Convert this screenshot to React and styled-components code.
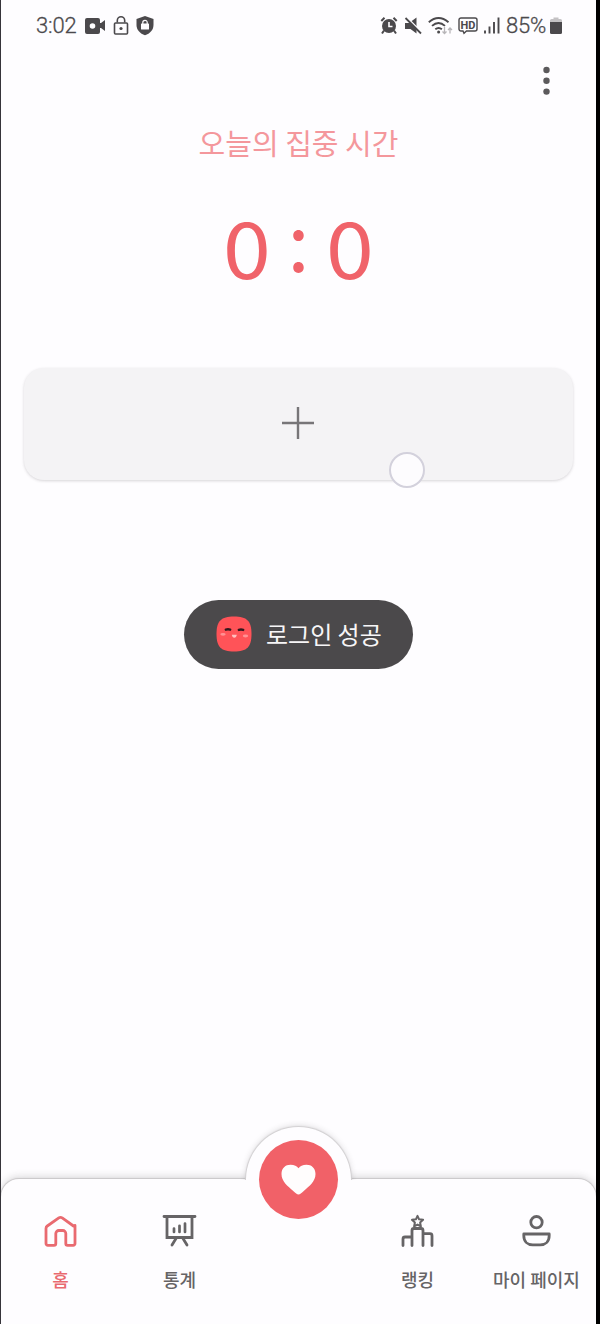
import React from "react";
import styled, { createGlobalStyle } from "styled-components";

const GlobalStyle = createGlobalStyle`
  * { box-sizing: border-box; }
  body { margin: 0; background: #fefdff; }
`;

const Screen = styled.main`
  width: 600px;
  height: 1324px;
  display: flex;
  flex-direction: column;
  background: #fefdff;
  border-left: 1px solid #36343a;
  border-right: 4px solid #000;
  font-family: "Noto Sans CJK KR", "Noto Sans", sans-serif;
  overflow: hidden;
`;

const StatusBar = styled.header`
  height: 52px;
  padding: 0 34px 0 35px;
  display: flex;
  align-items: center;
  justify-content: space-between;
  color: #4b494c;
  font: 400 22px/26px Roboto, sans-serif;
`;

const StatusGroup = styled.div`
  display: flex;
  align-items: center;
  gap: ${({ $gap }) => $gap}px;
`;

const StatusText = styled.span`
  width: ${({ $width }) => $width}px;
  font-size: 22px;
  font-weight: 300;
  letter-spacing: -0.2px;
  white-space: nowrap;
  -webkit-text-stroke: 0.3px #4b494c;
`;

const Glyph = styled.svg`
  display: block;
  flex: none;
  overflow: visible;
`;

const MenuRow = styled.div`
  height: 58px;
  padding-right: 42px;
  display: flex;
  align-items: center;
  justify-content: flex-end;
`;

const MenuButton = styled.button`
  width: 16px;
  height: 30px;
  padding: 0;
  border: 0;
  background: none;
  color: #5c5a5c;
`;

const Title = styled.h1`
  margin: 11px 0 0;
  height: 42px;
  text-align: center;
  font-size: 29px;
  font-weight: 400;
  line-height: 42px;
  color: #f4979c;
`;

const Timer = styled.div`
  height: 110px;
  margin-top: 27px;
  display: flex;
  justify-content: center;
  align-items: center;
  font-size: 79px;
  line-height: 110px;
  color: #f0636a;
`;

const Digit = styled.span`
  width: 44px;
  text-align: center;
  transform: scaleX(1.09);
`;

const Colon = styled.span`
  width: 59px;
  text-align: center;
  padding-bottom: 14px;
`;

const AddCard = styled.button`
  position: relative;
  align-self: center;
  width: 549px;
  height: 112px;
  margin: 68px 0 0;
  padding: 0 1px 2px 0;
  border: 0;
  border-radius: 20px;
  display: flex;
  align-items: center;
  justify-content: center;
  background: #f4f3f5;
  box-shadow: 0 1px 3px rgba(60, 55, 60, 0.2);
  color: #777578;
`;

const TouchPoint = styled.span`
  position: absolute;
  left: 365px;
  top: 84px;
  width: 36px;
  height: 36px;
  border: 2px solid #d3d1dc;
  border-radius: 50%;
  background: #fdfcfe;
`;

const Toast = styled.div`
  align-self: center;
  width: 229px;
  height: 69px;
  margin-top: 120px;
  padding: 0 0 1px 32px;
  border-radius: 35px;
  display: flex;
  align-items: center;
  gap: 14px;
  background: #4b494b;
  color: #f7f6f7;
  font-size: 24px;
  line-height: 34px;
  white-space: nowrap;
`;

const TabBar = styled.nav`
  position: relative;
  height: 145px;
  margin-top: auto;
  display: grid;
  grid-template-columns: repeat(5, 119px);
  border-radius: 18px 18px 0 0;
  background: #fefdff;
  box-shadow: 0 0 1px 1px #c9c7c9, 0 -3px 7px rgba(50, 45, 50, 0.15);
`;

const Tab = styled.a`
  height: 145px;
  padding-top: 35px;
  display: flex;
  flex-direction: column;
  align-items: center;
  gap: 18px;
  color: ${({ $active }) => ($active ? "#e96a70" : "#666466")};
  font-size: 18px;
  font-weight: 500;
  line-height: 26px;
  white-space: nowrap;
`;

const FocusSlot = styled.div`
  display: flex;
  justify-content: center;
`;

const FocusHalo = styled.div`
  position: absolute;
  top: -52px;
  left: 245px;
  width: 105px;
  height: 105px;
  border-radius: 50%;
  background: #fefdff;
  box-shadow: 0 0 1px 1px #d2d0d2, 0 -1px 6px rgba(50, 45, 50, 0.18);
  clip-path: inset(-10px -10px 52px -10px);
`;

const FocusButton = styled.button`
  position: absolute;
  top: -39px;
  left: 258px;
  width: 79px;
  height: 79px;
  padding: 0;
  border: 0;
  border-radius: 50%;
  display: flex;
  align-items: center;
  justify-content: center;
  background: #f16168;
  color: #fffdfd;
`;

const VideoIcon = () => (
  <Glyph width="22" height="18" viewBox="0 0 22 18" fill="currentColor">
    <path fillRule="evenodd" d="M3 1h11a2 2 0 0 1 2 2v3h1l4-3v11l-4-3h-1v4a2 2 0 0 1-2 2H3a2 2 0 0 1-2-2V3a2 2 0 0 1 2-2Zm5.5 5.2a2.8 2.8 0 1 0 0 5.6 2.8 2.8 0 0 0 0-5.6Z" />
  </Glyph>
);

const LockIcon = () => (
  <Glyph width="16" height="20" viewBox="0 0 16 20" fill="none" stroke="currentColor" strokeWidth="1.6">
    <rect x="1.5" y="7" width="13" height="11" rx="1" />
    <path d="M4.300 6.500V4.500a3.700 3.700 0 0 1 7.400 0v2" />
    <circle cx="8" cy="12.500" r="1.600" fill="currentColor" stroke="none" />
  </Glyph>
);

const ShieldIcon = () => (
  <Glyph width="18" height="20" viewBox="0 0 18 20">
    <path d="M9 0 17.500 3v6c0 5-3.500 8.500-8.500 10.300C4 17.500.500 14 .500 9V3Z" fill="currentColor" />
    <rect x="5" y="7.500" width="8" height="6" rx=".6" fill="#fefdff" />
    <path d="M6.800 8.500v-2a2.200 2.200 0 0 1 4.400 0v2" fill="none" stroke="#fefdff" strokeWidth="1.200" />
  </Glyph>
);

const AlarmIcon = () => (
  <Glyph width="18" height="18" viewBox="0 0 18 18" fill="none" stroke="currentColor">
    <circle cx="9" cy="9" r="7" fill="currentColor" stroke="none" />
    <path d="M1.300 4 4.500.800M16.700 4 13.500.800M4 13.500l-2 3M14 13.500l2 3" strokeWidth="2" />
    <path d="M9 5v4.500h3.500" stroke="#fefdff" strokeWidth="1.600" />
  </Glyph>
);

const MuteIcon = () => (
  <Glyph width="18" height="18" viewBox="0 0 18 18">
    <path d="M1 6h4l7.500-5.500v16L6.500 12H1Z" fill="currentColor" />
    <path d="M3 .500 18 15.500" stroke="#fefdff" strokeWidth="1.600" />
    <path d="M1.500 1 17 16.500" stroke="currentColor" strokeWidth="1.800" />
  </Glyph>
);

const WifiIcon = () => (
  <Glyph width="24" height="18" viewBox="0 0 24 18" fill="none" stroke="currentColor" strokeWidth="1.900">
    <path d="M.800 5.200Q10.500-3 20.500 5.200M4 8.900q6.500-5.700 13 0M7.300 12.300q3.300-2.700 6.600 0" />
    <circle cx="10.600" cy="14.900" r="1.500" fill="currentColor" stroke="none" />
    <path d="M16.500 10v6.500m-2-2 2 2 2-2M22 16.500V11m-2 2 2-2 2 2" stroke="#b7b5b8" strokeWidth="1.300" />
  </Glyph>
);

const HdText = styled.text`
  font: 700 11px Roboto, sans-serif;
  fill: currentColor;
`;

const HdIcon = () => (
  <Glyph width="20" height="18" viewBox="0 0 20 18">
    <path d="M3 1h14a2 2 0 0 1 2 2v9a2 2 0 0 1-2 2H8.500L6 16.300 5 14H3a2 2 0 0 1-2-2V3a2 2 0 0 1 2-2Z" fill="none" stroke="currentColor" strokeWidth="1.400" />
    <HdText x="10" y="11.500" textAnchor="middle">HD</HdText>
  </Glyph>
);

const SignalIcon = () => (
  <Glyph width="16" height="18" viewBox="0 0 16 18" stroke="currentColor" strokeWidth="1.900">
    <path d="M1 13.500v3M5.500 9.500v7M10 5v11.500M14.500 .500v16" />
  </Glyph>
);

const BatteryIcon = () => (
  <Glyph width="12" height="18" viewBox="0 0 12 18">
    <path d="M0 5V3.500A1.500 1.500 0 0 1 1.500 2H3.500V.500h5V2h2A1.500 1.500 0 0 1 12 3.500V5Z" fill="#c4c2c4" />
    <path d="M0 5h12v10.500a1.500 1.500 0 0 1-1.500 1.500h-9A1.500 1.500 0 0 1 0 15.500Z" fill="currentColor" />
  </Glyph>
);

const DotsIcon = () => (
  <Glyph width="16" height="30" viewBox="0 0 16 30" fill="currentColor">
    <circle cx="8.500" cy="4" r="3.200" />
    <circle cx="8.500" cy="14.800" r="3.200" />
    <circle cx="8.500" cy="25.600" r="3.200" />
  </Glyph>
);

const PlusIcon = () => (
  <Glyph width="32" height="32" viewBox="0 0 32 32" stroke="currentColor" strokeWidth="2.400">
    <path d="M16 0v32M0 16h32" />
  </Glyph>
);

const Mascot = () => (
  <Glyph width="36" height="36" viewBox="0 0 36 36">
    <path d="M18 .500C31 .500 35.500 5 35.500 18S31 35.500 18 35.500.500 31 .500 18 5 .500 18 .500Z" fill="#ff5358" />
    <path d="M9.800 13.700q2.200-.800 4.400 0M22.800 13.900q2.200-.800 4.400 0" fill="none" stroke="#30191d" strokeWidth="2.400" strokeLinecap="round" />
    <ellipse cx="7" cy="18.300" rx="2.700" ry="1.400" fill="#ff9294" />
    <ellipse cx="29.500" cy="20" rx="2.700" ry="1.400" fill="#ff9294" />
    <path d="M15.800 18.700h5q-.5 3-2.500 3t-2.500-3Z" fill="#ffc0bf" />
  </Glyph>
);

const HomeIcon = () => (
  <Glyph width="34" height="34" viewBox="0 0 34 34" fill="none" stroke="currentColor" strokeWidth="2.800" strokeLinejoin="round" strokeLinecap="round">
    <path d="M31 11.500V29.500a1.800 1.800 0 0 1-1.800 1.800h-5.600a1.800 1.800 0 0 1-1.800-1.800V19.500a3 3 0 0 0-3-3h-4a3 3 0 0 0-3 3v10a1.800 1.800 0 0 1-1.800 1.800H3.800A1.800 1.800 0 0 1 2 29.500V14.500a3 3 0 0 1 1.300-2.500L14.800 3.900a3 3 0 0 1 3.400 0L29.500 12" />
  </Glyph>
);

const StatsIcon = () => (
  <Glyph width="34" height="34" viewBox="0 0 34 34" fill="none" stroke="currentColor" strokeWidth="2.800" strokeLinecap="round">
    <path d="M1 2.500h31M4 2.500v21h25v-21M13 24.500l-4 6.500M20 24.500l4 6.500" />
    <path d="M11 14.500v3.500M16.500 11.800V18M22 9.500V18" strokeWidth="2.700" />
  </Glyph>
);

const RankIcon = () => (
  <Glyph width="34" height="34" viewBox="0 0 34 34" fill="none" stroke="currentColor" strokeWidth="2.800" strokeLinejoin="round" strokeLinecap="round">
    <path d="M2 31.500v-6.500a2 2 0 0 1 2-2h6.500M11 31.500V16.500a2 2 0 0 1 2-2h7a2 2 0 0 1 2 2v15M22.500 19.700h6.500a2 2 0 0 1 2 2v9.800" />
    <path d="m16.500 1.800 1.600 3.500 4 .5-3 2.700.8 4-3.400-1.900-3.400 1.900.8-4-3-2.700 4-.5Z" strokeWidth="2" />
  </Glyph>
);

const UserIcon = () => (
  <Glyph width="34" height="34" viewBox="0 0 34 34" fill="none" stroke="currentColor" strokeWidth="2.800" strokeLinejoin="round">
    <circle cx="16.500" cy="8.200" r="5.700" />
    <path d="M3.800 20h25.400v1.700c0 6-4 9.200-9 9.200h-7.400c-5 0-9-3.200-9-9.200Z" />
  </Glyph>
);

const HeartIcon = () => (
  <Glyph width="34" height="32" viewBox="0 0 34 32" fill="currentColor">
    <path d="M16.500 30.500c-1.500 0-3-1.700-5-3.300C5.500 22-.500 17.500-.500 10c0-6 4-9.300 9-9.300 4 0 6.300 1.300 8 3.600 1.700-2.300 4-3.600 8-3.600 5 0 9 3.300 9 9.300 0 7.500-6 12-12 17.200-2 1.600-3.500 3.300-5 3.300Z" />
  </Glyph>
);

export default function App() {
  return (
    <>
      <GlobalStyle />
      <Screen>
        <StatusBar>
          <StatusGroup $gap={7}>
            <StatusText $width={41}>3:02</StatusText>
            <VideoIcon />
            <LockIcon />
            <ShieldIcon />
          </StatusGroup>
          <StatusGroup $gap={6}>
            <AlarmIcon />
            <MuteIcon />
            <WifiIcon />
            <HdIcon />
            <SignalIcon />
            <StatusText $width={38}>85%</StatusText>
            <BatteryIcon />
          </StatusGroup>
        </StatusBar>
        <MenuRow>
          <MenuButton aria-label="메뉴"><DotsIcon /></MenuButton>
        </MenuRow>
        <Title>오늘의 집중 시간</Title>
        <Timer>
          <Digit>0</Digit>
          <Colon>:</Colon>
          <Digit>0</Digit>
        </Timer>
        <AddCard aria-label="추가">
          <PlusIcon />
          <TouchPoint />
        </AddCard>
        <Toast>
          <Mascot />
          <span>로그인 성공</span>
        </Toast>
        <TabBar>
          <Tab $active><HomeIcon />홈</Tab>
          <Tab><StatsIcon />통계</Tab>
          <FocusSlot>
            <FocusHalo />
            <FocusButton aria-label="집중 시작"><HeartIcon /></FocusButton>
          </FocusSlot>
          <Tab><RankIcon />랭킹</Tab>
          <Tab><UserIcon />마이 페이지</Tab>
        </TabBar>
      </Screen>
    </>
  );
}
